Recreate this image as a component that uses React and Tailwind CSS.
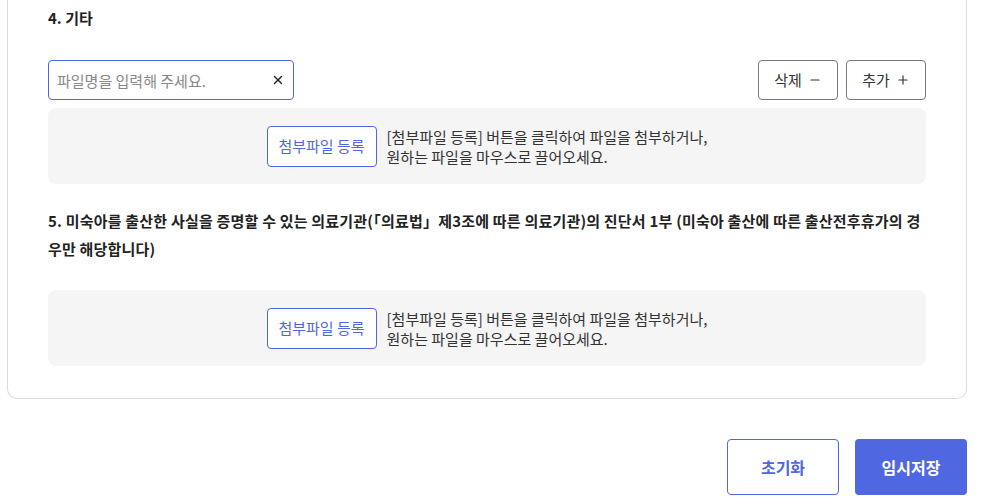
import { X, Minus, Plus } from 'lucide-react';

const UploadBox = () => (
  <div className="h-[76px] bg-[#f5f5f5] rounded-[8px] flex items-center justify-center gap-[10px]">
    <button className="w-[110px] h-[41px] bg-white border border-[#4f67e0] rounded-[4px] text-[#4f67e0] text-[15px]">
      첨부파일 등록
    </button>
    <p className="text-[15px] leading-[20px] text-[#333] pt-[1px]">
      [첨부파일 등록] 버튼을 클릭하여 파일을 첨부하거나,
      <br />
      원하는 파일을 마우스로 끌어오세요.
    </p>
  </div>
);

const App = () => {
  return (
    <div
      className="w-[987px] h-[504px] bg-white overflow-hidden"
      style={{ fontFamily: '"Noto Sans CJK KR", "Noto Sans", sans-serif' }}
    >
      <div className="ml-[7px] w-[960px] border-x border-b border-[#dcdcdc] rounded-b-[10px] px-10 pt-[8px] pb-[32px]">
        <h3 className="text-[15px] leading-[20px] font-bold text-[#222]">4. 기타</h3>

        <div className="mt-8 flex items-center justify-between">
          <div className="relative w-[246px] h-[40px]">
            <input
              className="w-full h-full border border-[#4f67e0] rounded-[4px] pl-[8px] pr-8 text-[15px] text-[#333] placeholder:text-[#888] outline-none"
              placeholder="파일명을 입력해 주세요."
            />
            <X className="absolute right-[9px] top-1/2 -translate-y-1/2 w-[14px] h-[14px] text-[#222]" strokeWidth={2.5} />
          </div>
          <div className="flex gap-2">
            <button className="w-[80px] h-[40px] border border-[#777] rounded-[4px] flex items-center justify-center gap-[6px] text-[15px] text-[#333]">
              삭제 <Minus className="w-[14px] h-[14px]" strokeWidth={2} />
            </button>
            <button className="w-[80px] h-[40px] border border-[#777] rounded-[4px] flex items-center justify-center gap-[6px] text-[15px] text-[#333]">
              추가 <Plus className="w-[14px] h-[14px]" strokeWidth={2} />
            </button>
          </div>
        </div>

        <div className="mt-2">
          <UploadBox />
        </div>

        <h3 className="mt-[23px] text-[15px] leading-[28px] font-bold text-[#222] break-all tracking-[0.2px]">
          5. 미숙아를 출산한 사실을 증명할 수 있는 의료기관(「의료법」제3조에 따른 의료기관)의 진단서 1부 (미숙아 출산에 따른 출산전후휴가의 경우만 해당합니다)
        </h3>

        <div className="mt-[27px]">
          <UploadBox />
        </div>
      </div>

      <div className="mt-[40px] mr-[20px] flex justify-end gap-4">
        <button className="w-[112px] h-[56px] bg-white border border-[#4f67e0] rounded-[4px] text-[#4f67e0] text-[16px] font-bold">
          초기화
        </button>
        <button className="w-[112px] h-[56px] bg-[#4f67e0] rounded-[4px] text-white text-[16px] font-bold">
          임시저장
        </button>
      </div>
    </div>
  );
};

export default App;
